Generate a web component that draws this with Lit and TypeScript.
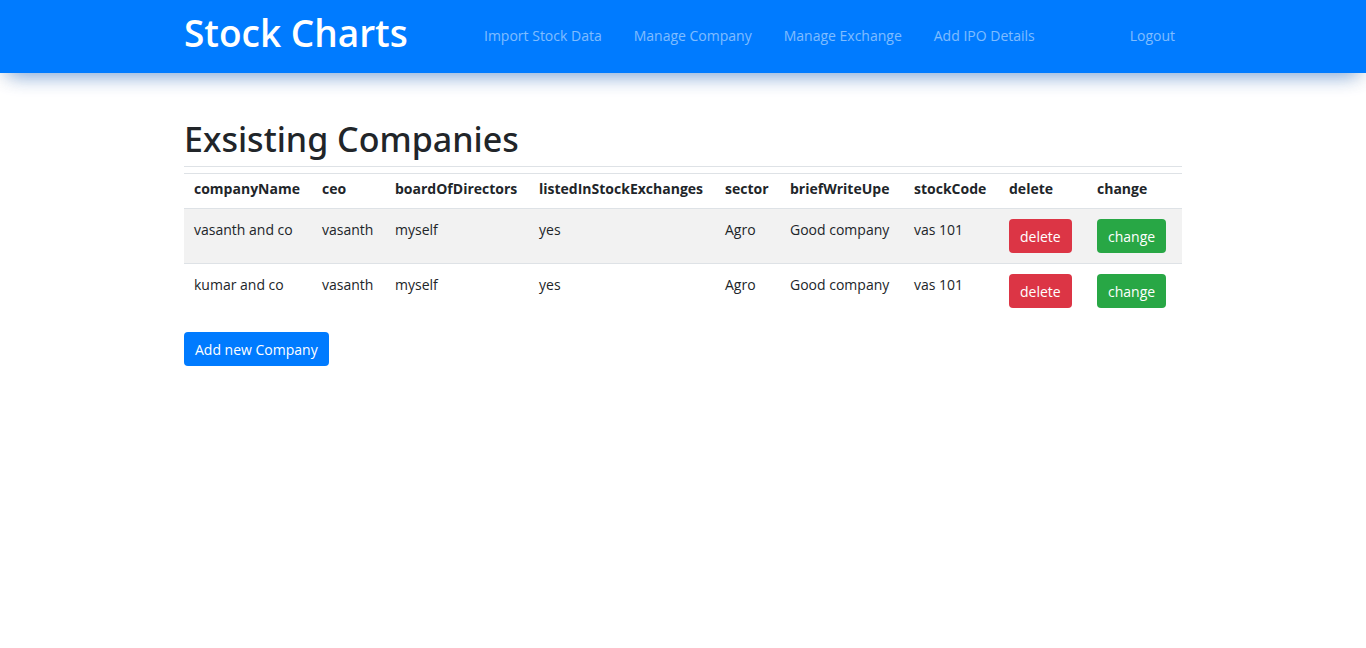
import { LitElement, html, css } from "lit";
import { customElement, state } from "lit/decorators.js";

interface Company {
  companyName: string;
  ceo: string;
  boardOfDirectors: string;
  listedInStockExchanges: string;
  sector: string;
  briefWriteUpe: string;
  stockCode: string;
}

const FIELDS: (keyof Company)[] = [
  "companyName",
  "ceo",
  "boardOfDirectors",
  "listedInStockExchanges",
  "sector",
  "briefWriteUpe",
  "stockCode",
];

@customElement("app-navbar")
export class AppNavbar extends LitElement {
  static styles = css`
    :host {
      display: block;
      background: #007bff;
      box-shadow:
        0 12px 20px -10px rgba(0, 95, 215, 0.48),
        0 4px 18px -2px rgba(90, 85, 70, 0.2);
    }
    .bar {
      box-sizing: border-box;
      display: flex;
      align-items: center;
      max-width: 998px;
      min-height: 73px;
      margin: 0 auto;
    }
    .brand {
      width: 284px;
      padding-bottom: 8px;
      color: #fff;
      font: 600 37px/48px "Open Sans", "Noto Sans", sans-serif;
      text-decoration: none;
      white-space: nowrap;
    }
    .links {
      display: flex;
      flex: 1;
      margin: 0;
      padding: 0;
      list-style: none;
    }
    .last {
      margin-left: auto;
    }
    .link {
      display: block;
      padding: 7px 16px 9px;
      color: rgba(255, 255, 255, 0.5);
      text-decoration: none;
      white-space: nowrap;
    }
    .last .link {
      padding-right: 7px;
    }
    .link:hover {
      color: rgba(255, 255, 255, 0.75);
    }
  `;

  render() {
    const links = ["Import Stock Data", "Manage Company", "Manage Exchange", "Add IPO Details"];
    return html`
      <nav class="bar">
        <a class="brand" href="#">Stock Charts</a>
        <ul class="links">
          ${links.map((l) => html`<li><a class="link" href="#">${l}</a></li>`)}
          <li class="last"><a class="link" href="#">Logout</a></li>
        </ul>
      </nav>
    `;
  }
}

@customElement("app-root")
export class AppRoot extends LitElement {
  @state() companies: Company[] = ["vasanth and co", "kumar and co"].map((companyName) => ({
    companyName,
    ceo: "vasanth",
    boardOfDirectors: "myself",
    listedInStockExchanges: "yes",
    sector: "Agro",
    briefWriteUpe: "Good company",
    stockCode: "vas 101",
  }));

  static styles = css`
    :host {
      display: block;
      color: #212529;
      font: 14px/22px "Open Sans", "Noto Sans", sans-serif;
    }
    .content {
      max-width: 998px;
      margin: 0 auto;
      padding-top: 44px;
    }
    .title {
      margin: 0 0 6px;
      padding-bottom: 5px;
      border-bottom: 1px solid #dee2e6;
      font-family: "Noto Sans", sans-serif;
      font-size: 34px;
      font-weight: 500;
      line-height: 44px;
    }
    .table {
      width: 100%;
      margin-bottom: 14px;
      border-collapse: separate;
      border-spacing: 0;
      table-layout: fixed;
    }
    .c0 { width: 128px; }
    .c1 { width: 73px; }
    .c2 { width: 144px; }
    .c3 { width: 186px; }
    .c4 { width: 65px; }
    .c5 { width: 124px; }
    .c6 { width: 95px; }
    .c7 { width: 88px; }
    .c8 { width: 95px; }
    .head,
    .cell {
      box-sizing: border-box;
      border-top: 1px solid #dee2e6;
      text-align: left;
      vertical-align: top;
      white-space: nowrap;
    }
    .head {
      padding: 4px 0 8px 10px;
      font-weight: 700;
    }
    .cell {
      padding: 10px 0 10px 10px;
    }
    .row:nth-child(odd) {
      background: #f2f2f2;
    }
    .btn {
      display: block;
      padding: 7px 11px 5px;
      border: 0;
      border-radius: 4px;
      color: #fff;
      font: inherit;
      white-space: nowrap;
      cursor: pointer;
    }
    .danger { background: #dc3545; }
    .success { background: #28a745; }
    .primary { background: #007bff; }
  `;

  private remove(company: Company) {
    this.companies = this.companies.filter((c) => c !== company);
  }

  render() {
    return html`
      <app-navbar></app-navbar>
      <main class="content">
        <h1 class="title">Exsisting Companies</h1>
        <table class="table">
          <thead>
            <tr>
              ${[...FIELDS, "delete", "change"].map(
                (name, i) => html`<th class="head c${i}" scope="col">${name}</th>`
              )}
            </tr>
          </thead>
          <tbody>
            ${this.companies.map(
              (c) => html`
                <tr class="row">
                  ${FIELDS.map((f) => html`<td class="cell">${c[f]}</td>`)}
                  <td class="cell">
                    <button class="btn danger" type="button" @click=${() => this.remove(c)}>delete</button>
                  </td>
                  <td class="cell"><button class="btn success" type="button">change</button></td>
                </tr>
              `
            )}
          </tbody>
        </table>
        <button class="btn primary" type="button">Add new Company</button>
      </main>
    `;
  }
}
